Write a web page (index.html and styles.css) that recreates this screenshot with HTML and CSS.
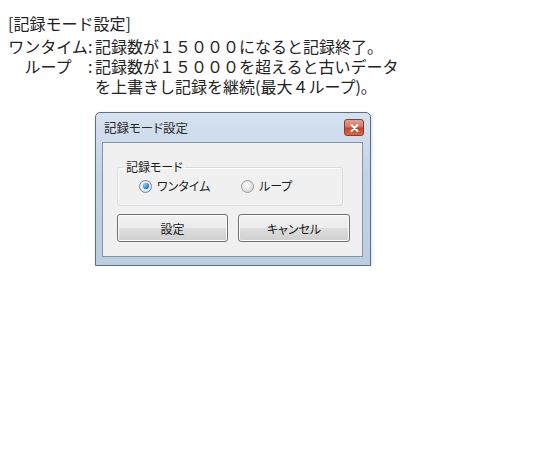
FILE: index.html
```html
<!DOCTYPE html>
<html lang="ja">
<head>
    <meta charset="UTF-8">
    <title>記録モード設定</title>
    <link rel="stylesheet" href="styles.css">
</head>
<body>
    <div class="notes">
        <p class="heading">[記録モード設定]</p>
        <div class="modes">
            <span class="mode-name">ワンタイム</span>
            <span class="colon">:</span>
            <span class="mode-desc">記録数が１５０００になると記録終了。</span>

            <span class="mode-name">ループ</span>
            <span class="colon">:</span>
            <span class="mode-desc">記録数が１５０００を超えると古いデータ</span>

            <span></span>
            <span></span>
            <span class="mode-desc">を上書きし記録を継続(最大４ループ)。</span>
        </div>
    </div>

    <div class="dialog">
        <div class="titlebar">
            <span class="title">記録モード設定</span>
            <button type="button" class="close-btn">
                <svg width="9" height="8" viewBox="0 0 9 8">
                    <path d="M1.5 1 L7.5 7 M7.5 1 L1.5 7" stroke="#ffffff" stroke-width="2" stroke-linecap="round"/>
                </svg>
            </button>
        </div>
        <div class="client">
            <fieldset class="group">
                <legend>記録モード</legend>
                <div class="options">
                    <label class="option">
                        <span class="radio checked"></span>
                        <span>ワンタイム</span>
                    </label>
                    <label class="option">
                        <span class="radio"></span>
                        <span>ループ</span>
                    </label>
                </div>
            </fieldset>
            <div class="buttons">
                <button type="button" class="btn btn-ok">設定</button>
                <button type="button" class="btn btn-cancel">キャンセル</button>
            </div>
        </div>
    </div>
</body>
</html>
```

FILE: styles.css
```css
body {
    margin: 0;
    padding: 13px 0 0 8px;
    font-family: "Noto Sans CJK JP", "Noto Sans", sans-serif;
    color: #222222;
    background-color: #ffffff;
}
.notes {
    font-size: 16px;
    line-height: 20px;
}
.heading {
    margin: 0 0 3px 0;
}
.modes {
    display: grid;
    grid-template-columns: 80px 7px auto;
}
.mode-name {
    text-align: center;
}
.colon {
    text-align: left;
}
.dialog {
    box-sizing: border-box;
    width: 276px;
    height: 154px;
    margin: 16px 0 0 87px;
    padding: 0 7px 8px 6px;
    border: 1px solid #5f6f83;
    border-radius: 5px 5px 0 0;
    background: linear-gradient(to bottom, #d6e2f0, #c2d3e8 40%, #bccde2);
    box-shadow: 1px 1px 3px rgba(0, 0, 0, 0.15);
    font-family: "Noto Sans CJK JP", "Noto Sans", sans-serif;
    font-feature-settings: "palt";
}
.titlebar {
    height: 29px;
    display: flex;
    align-items: center;
    justify-content: space-between;
}
.title {
    padding-left: 2px;
    font-size: 12.5px;
    color: #2a2a2a;
}
.close-btn {
    width: 20px;
    height: 17px;
    margin: 0 -1px 0 0;
    padding: 0;
    border: 1px solid #8a3b30;
    border-radius: 3px;
    background: linear-gradient(to bottom, #e6a08f, #d27461 45%, #c4452d 55%, #d06a4f);
    display: flex;
    align-items: center;
    justify-content: center;
}
.client {
    box-sizing: border-box;
    height: 115px;
    padding: 16px 0 0 14px;
    border: 1px solid #8593a6;
    background-color: #f0f0f0;
}
.group {
    box-sizing: border-box;
    width: 226px;
    margin: 0;
    padding: 1px 0 9px 21px;
    border: 1px solid #d5dde3;
    border-radius: 3px;
    box-shadow: inset 1px 1px 0 #ffffff;
}
.group legend {
    margin-left: -15px;
    padding: 0 2px;
    font-size: 12px;
    line-height: 16px;
    color: #1e1e1e;
}
.options {
    display: flex;
    gap: 24px;
    font-size: 12px;
    line-height: 20px;
    color: #1e1e1e;
}
.option {
    display: flex;
    align-items: center;
    gap: 5px;
    width: 78px;
}
.radio {
    box-sizing: border-box;
    width: 13px;
    height: 13px;
    border: 1px solid #9a9a9a;
    border-radius: 50%;
    background: radial-gradient(circle at 40% 35%, #ffffff, #dcdcdc 70%, #c8c8c8);
    display: flex;
    align-items: center;
    justify-content: center;
}
.radio.checked {
    border-color: #6f8aa3;
    background: radial-gradient(circle at 40% 35%, #ffffff, #d6e4ef 70%, #b9cde0);
}
.radio.checked::after {
    content: "";
    width: 6px;
    height: 6px;
    border-radius: 50%;
    background: radial-gradient(circle at 35% 35%, #8fd0f5, #2f79b4 60%, #1b4f7e);
}
.buttons {
    display: flex;
    gap: 10px;
    margin-top: 8px;
}
.btn {
    box-sizing: border-box;
    flex-shrink: 0;
    height: 28px;
    padding: 0;
    border: 1px solid #707070;
    border-radius: 3px;
    background: linear-gradient(to bottom, #f2f2f2, #ebebeb 48%, #dddddd 52%, #cfcfcf);
    box-shadow: inset 0 0 0 1px #fcfcfc;
    font-family: "Noto Sans CJK JP", "Noto Sans", sans-serif;
    font-feature-settings: "palt";
    font-size: 12px;
    color: #1a1a1a;
}
.btn-ok {
    width: 111px;
}
.btn-cancel {
    width: 112px;
}
```
